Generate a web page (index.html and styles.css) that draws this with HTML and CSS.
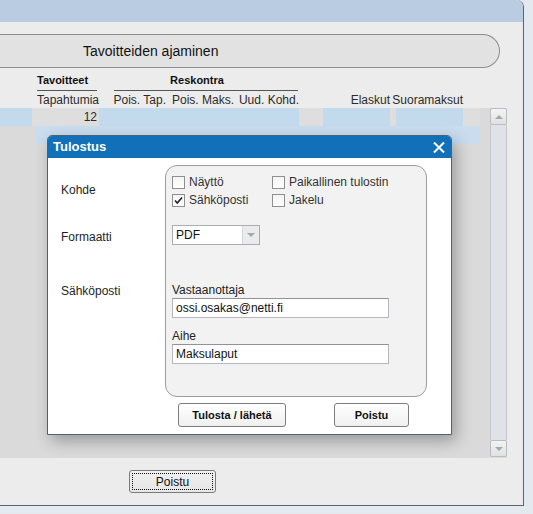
FILE: index.html
```html
<!DOCTYPE html>
<html lang="fi">
<head>
  <meta charset="UTF-8">
  <meta name="viewport" content="width=device-width, initial-scale=1.0">
  <title>Tavoitteiden ajaminen</title>
  <link rel="stylesheet" href="styles.css">
</head>
<body>
  <div class="window">
    <div class="band"></div>

    <div class="pill">Tavoitteiden ajaminen</div>

    <div class="heads">
      <div class="group-head tav">Tavoitteet</div>
      <div class="group-head res">Reskontra</div>

      <div class="col c1">Tapahtumia</div>
      <div class="col c2">Pois. Tap.</div>
      <div class="col c3">Pois. Maks.</div>
      <div class="col c4">Uud. Kohd.</div>
      <div class="col c6">Elaskut</div>
      <div class="col c8">Suoramaksut</div>
    </div>

    <div class="grid-area">
      <div class="rows">
        <div class="row">
          <div class="cell blue"></div>
          <div class="cell gray num">12</div>
          <div class="cell blue wide"></div>
          <div class="cell gray"></div>
          <div class="cell blue"></div>
          <div class="cell gray"></div>
          <div class="cell blue"></div>
          <div class="cell gray"></div>
        </div>
        <div class="row-sel"></div>
      </div>
      <div class="scrollbar">
        <div class="sb-btn"><span class="arrow up"></span></div>
        <div class="sb-track"></div>
        <div class="sb-btn"><span class="arrow down"></span></div>
      </div>
    </div>

    <div class="footer">
      <button type="button" class="btn-plain">Poistu</button>
    </div>

    <div class="dialog">
      <div class="dlg-title">
        <span>Tulostus</span>
        <svg class="close" width="12" height="11" viewBox="0 0 12 11">
          <path d="M1 0.5 L11 10.5 M11 0.5 L1 10.5" stroke="#fff" stroke-width="2" fill="none"/>
        </svg>
      </div>
      <div class="dlg-body">
        <div class="dlg-main">
          <div class="labels">
            <div class="lbl kohde">Kohde</div>
            <div class="lbl formaatti">Formaatti</div>
            <div class="lbl sposti">Sähköposti</div>
          </div>
          <div class="groupbox">
            <div class="checks">
              <div class="check"><span class="box"></span>Näyttö</div>
              <div class="check"><span class="box"></span>Paikallinen tulostin</div>
              <div class="check">
                <span class="box">
                  <svg width="11" height="11" viewBox="0 0 11 11"><path d="M2 5.5 L4.3 8 L9 2.5" stroke="#222" stroke-width="1.6" fill="none"/></svg>
                </span>Sähköposti
              </div>
              <div class="check"><span class="box"></span>Jakelu</div>
            </div>
            <div class="select">
              <span class="sel-text">PDF</span>
              <span class="sel-drop"><span class="arrow down"></span></span>
            </div>
            <div class="field-lbl first">Vastaanottaja</div>
            <input class="field" type="text" value="ossi.osakas@netti.fi">
            <div class="field-lbl">Aihe</div>
            <input class="field" type="text" value="Maksulaput">
          </div>
        </div>
        <div class="dlg-buttons">
          <button type="button" class="btn send">Tulosta / lähetä</button>
          <button type="button" class="btn quit">Poistu</button>
        </div>
      </div>
    </div>
  </div>
</body>
</html>
```

FILE: styles.css
```css
body {
  margin: 0;
  background: #e4e9ef;
  font-family: "Liberation Sans", Arial, sans-serif;
  color: #222;
}
.window {
  position: relative;
  width: 523px;
  height: 505px;
  background: #ececec;
  border-right: 1px solid #56657a;
  border-bottom: 1px solid #56657a;
  border-top-right-radius: 7px;
}
.band {
  height: 22px;
  background: #b9cce2;
  border-top-right-radius: 7px;
}
.pill {
  margin-top: 12px;
  height: 32px;
  line-height: 32px;
  border: 1px solid #8c8c8c;
  border-left: none;
  border-radius: 0 17px 17px 0;
  background: #e2e2e2;
  padding-left: 83px;
  width: 416px;
  font-size: 14px;
  color: #111;
}

/* column headers */
.heads {
  display: grid;
  grid-template-columns: 32px 67px 67px 68px 65px 24px 67px 6px 67px;
  grid-template-rows: 19px 17px;
  margin-top: 4px;
  font-size: 12px;
  color: #2b2b2b;
}
.group-head {
  font-weight: bold;
  font-size: 11px;
  color: #111;
  line-height: 17px;
  border-bottom: 1px solid #555;
  white-space: nowrap;
}
.tav {
  grid-column: 2;
  margin: 0 2px 0 5px;
}
.res {
  grid-column: 3 / 6;
  margin: 0 1px 0 15px;
  padding-right: 18px;
  text-align: center;
}
.col {
  grid-row: 2;
  display: flex;
  justify-content: flex-end;
  align-items: center;
  white-space: nowrap;
}
.c1 { grid-column: 2; }
.c2 { grid-column: 3; }
.c3 { grid-column: 4; }
.c4 { grid-column: 5; }
.c6 { grid-column: 7; }
.c8 { grid-column: 9; }

/* data area */
.grid-area {
  display: flex;
  width: 507px;
  height: 350px;
  background: #dadada;
}
.rows {
  width: 480px;
}
.row {
  display: grid;
  grid-template-columns: 32px 67px 200px 24px 67px 6px 67px 17px;
  height: 18px;
}
.cell.blue { background: #c3daed; }
.cell.gray { background: #dedede; }
.cell.num {
  text-align: right;
  padding-right: 2px;
  font-size: 12px;
  line-height: 18px;
  color: #2b2b2b;
}
.row-sel {
  margin-left: 36px;
  height: 18px;
  background: #c9ddef;
}
.scrollbar {
  margin-left: 10px;
  width: 17px;
  height: 349px;
  display: flex;
  flex-direction: column;
}
.sb-btn {
  height: 17px;
  box-sizing: border-box;
  border: 1px solid #b9bcc0;
  border-radius: 2px;
  background: linear-gradient(#f3f3f3, #e1e1e1);
  display: flex;
  align-items: center;
  justify-content: center;
}
.sb-track {
  flex: 1;
  background: #dfe2e6;
  border-left: 1px solid #c4c7cb;
  border-right: 1px solid #c4c7cb;
}
.arrow {
  width: 0;
  height: 0;
  border-left: 4px solid transparent;
  border-right: 4px solid transparent;
}
.arrow.up { border-bottom: 4px solid #a3a8ae; }
.arrow.down { border-top: 4px solid #a3a8ae; }

.footer {
  padding: 12px 0 0 129px;
}
.btn-plain {
  width: 87px;
  height: 23px;
  border: 1px solid #7b7b7b;
  border-radius: 3px;
  background: linear-gradient(#f0f0f0, #e6e6e6);
  font-family: inherit;
  font-size: 12px;
  color: #111;
  outline: 1px dotted #111;
  outline-offset: -4px;
}

/* dialog */
.dialog {
  position: absolute;
  left: 47px;
  top: 135px;
  width: 405px;
  height: 300px;
  box-sizing: border-box;
  border: 1px solid #4e6072;
  border-radius: 5px 5px 0 0;
  background: #fff;
  box-shadow: 4px 6px 16px rgba(0, 0, 0, 0.3);
}
.dlg-title {
  height: 22px;
  background: #1170b7;
  border-radius: 4px 4px 0 0;
  color: #fff;
  font-weight: bold;
  font-size: 13px;
  line-height: 22px;
  padding: 0 6px 0 5px;
  display: flex;
  justify-content: space-between;
  align-items: center;
}
.dlg-body {
  padding-top: 7px;
}
.dlg-main {
  display: flex;
}
.labels {
  width: 104px;
  padding-left: 13px;
  font-size: 12px;
  color: #1e1e1e;
}
.lbl { line-height: 16px; }
.kohde { margin-top: 17px; }
.formaatti { margin-top: 31px; }
.sposti { margin-top: 38px; }
.groupbox {
  border: 1px solid #9c9c9c;
  border-radius: 12px;
  background: #f2f2f2;
  padding: 7px 0 0 6px;
  width: 254px;
  height: 223px;
  font-size: 12px;
  color: #333;
}
.checks {
  display: grid;
  grid-template-columns: 100px auto;
  grid-auto-rows: 18px;
}
.check {
  display: flex;
  align-items: center;
  gap: 4px;
  white-space: nowrap;
}
.box {
  width: 13px;
  height: 13px;
  box-sizing: border-box;
  border: 1px solid #8f8f8f;
  background: linear-gradient(#f4f4f4, #fff);
  display: flex;
  align-items: center;
  justify-content: center;
}
.select {
  margin-top: 16px;
  width: 88px;
  height: 20px;
  box-sizing: border-box;
  border: 1px solid #abadb3;
  background: #fff;
  display: flex;
}
.sel-text {
  flex: 1;
  padding-left: 3px;
  line-height: 18px;
  color: #111;
}
.sel-drop {
  width: 16px;
  background: #ebebeb;
  border-left: 1px solid #d6d6d6;
  display: flex;
  align-items: center;
  justify-content: center;
}
.field-lbl {
  line-height: 16px;
  margin-top: 10px;
  color: #222;
}
.field-lbl.first { margin-top: 37px; }
.field {
  display: block;
  width: 217px;
  height: 20px;
  box-sizing: border-box;
  margin: 0;
  border: 1px solid #b5b7bc;
  border-top-color: #8f9296;
  padding: 0 3px;
  font-family: inherit;
  font-size: 12px;
  color: #111;
  background: #fff;
}
.dlg-buttons {
  display: flex;
  gap: 48px;
  padding: 6px 0 0 130px;
}
.btn {
  height: 24px;
  border: 1px solid #7d7d7d;
  border-radius: 3px;
  background: linear-gradient(#fff, #f0f0f0);
  font-family: inherit;
  font-weight: bold;
  font-size: 11px;
  color: #111;
}
.send { width: 108px; }
.quit { width: 75px; }
```
